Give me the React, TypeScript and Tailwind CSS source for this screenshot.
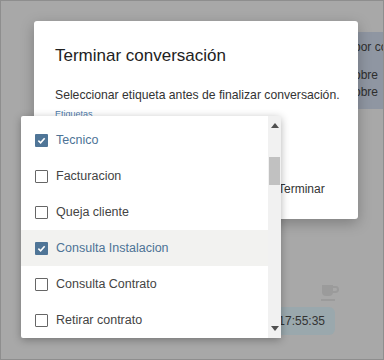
import React from "react";

const items = [
  { label: "Tecnico", checked: true, hl: false },
  { label: "Facturacion", checked: false, hl: false },
  { label: "Queja cliente", checked: false, hl: false },
  { label: "Consulta Instalacion", checked: true, hl: true },
  { label: "Consulta Contrato", checked: false, hl: false },
  { label: "Retirar contrato", checked: false, hl: false },
];

function Box({ checked }: { checked: boolean }) {
  if (checked)
    return (
      <span className="w-[13px] h-[13px] bg-[#4f7597] rounded-[1px] flex items-center justify-center shrink-0">
        <svg width="9" height="9" viewBox="0 0 10 10">
          <path d="M1.5 5.2 L4 7.5 L8.5 2.5" stroke="white" strokeWidth="1.8" fill="none" />
        </svg>
      </span>
    );
  return <span className="w-[13px] h-[13px] border-[1.5px] border-[#666] rounded-[1px] bg-white shrink-0" />;
}

export default function App() {
  return (
    <div
      className="relative w-[384px] h-[360px] overflow-hidden bg-[#a8a8a8] border border-[#8e8e8e]"
      style={{ fontFamily: '"Liberation Sans", Arial, sans-serif' }}
    >
      {/* background chat */}
      <div className="flex flex-col items-end pt-[31px]">
        <div className="w-[46px] h-[77px] bg-[#8f96a2] rounded-l-[4px] text-[12px] text-[#2e2e2e] leading-[17px] whitespace-nowrap overflow-hidden">
          <div className="pt-[7px] pl-[17px]">por co</div>
          <div className="pt-[11px] pl-[17px]">obre</div>
          <div className="pl-[17px]">obre</div>
        </div>
        <div className="mr-[44px] mt-[176px] flex flex-col items-start">
          <svg width="18" height="12" viewBox="0 0 18 12">
            <path d="M1 0 H12 V7 Q12 11 8 11 H5 Q1 11 1 7 Z" fill="#9b9b9b" />
            <path d="M12 2 H15 Q17 2 17 4.5 Q17 7 14 7 H12" stroke="#9b9b9b" strokeWidth="2" fill="none" />
          </svg>
          <div className="mt-[2px] w-[14px] h-[2px] bg-[#9b9b9b]" />
        </div>
        <div className="mr-[48px] mt-[6px] h-[28px] w-[70px] bg-[#9aa8ad] rounded-[6px] flex items-center justify-end pr-[10px] text-[12px] text-[#333]">
          17:55:35
        </div>
      </div>

      {/* dialog */}
      <div className="absolute left-[33px] top-[20px] w-[324px] h-[198px] bg-white rounded-[3px] shadow-[0_4px_14px_rgba(0,0,0,0.25)]">
        <div className="pl-[21px] pt-[24px] text-[17px] text-[#222] leading-[22px]">Terminar conversación</div>
        <div className="pl-[21px] pt-[20px] text-[12.2px] text-[#333] leading-[16px]">
          Seleccionar etiqueta antes de finalizar conversación.
        </div>
        <div className="pl-[21px] pt-[6px] text-[9px] text-[#4d7bab] leading-[10px]">Etiquetas</div>
        <div className="absolute left-[244px] top-[159px] text-[12px] text-[#333]">Terminar</div>
      </div>

      {/* dropdown */}
      <div className="absolute left-[20px] top-[115px] w-[260px] h-[222px] bg-white shadow-[0_2px_8px_rgba(0,0,0,0.3)] rounded-[2px] flex">
        <div className="flex-1 pt-[6px] flex flex-col">
          {items.map((it) => (
            <div
              key={it.label}
              className={`h-[36.4px] flex items-center gap-[8px] pl-[14px] text-[12.5px] ${
                it.hl ? "bg-[#f2f2f0]" : ""
              } ${it.checked ? "text-[#4d7396]" : "text-[#444]"}`}
            >
              <Box checked={it.checked} />
              <span>{it.label}</span>
            </div>
          ))}
        </div>
        <div className="w-[13px] bg-[#f1f1f1] flex flex-col items-center">
          <svg width="8" height="5" viewBox="0 0 8 5" className="mt-[7px]">
            <path d="M0 5 L4 0 L8 5 Z" fill="#505050" />
          </svg>
          <div className="mt-[29px] w-[11px] h-[28px] bg-[#c1c1c1]" />
          <div className="flex-1" />
          <svg width="8" height="5" viewBox="0 0 8 5" className="mb-[7px]">
            <path d="M0 0 L8 0 L4 5 Z" fill="#505050" />
          </svg>
        </div>
      </div>
    </div>
  );
}
